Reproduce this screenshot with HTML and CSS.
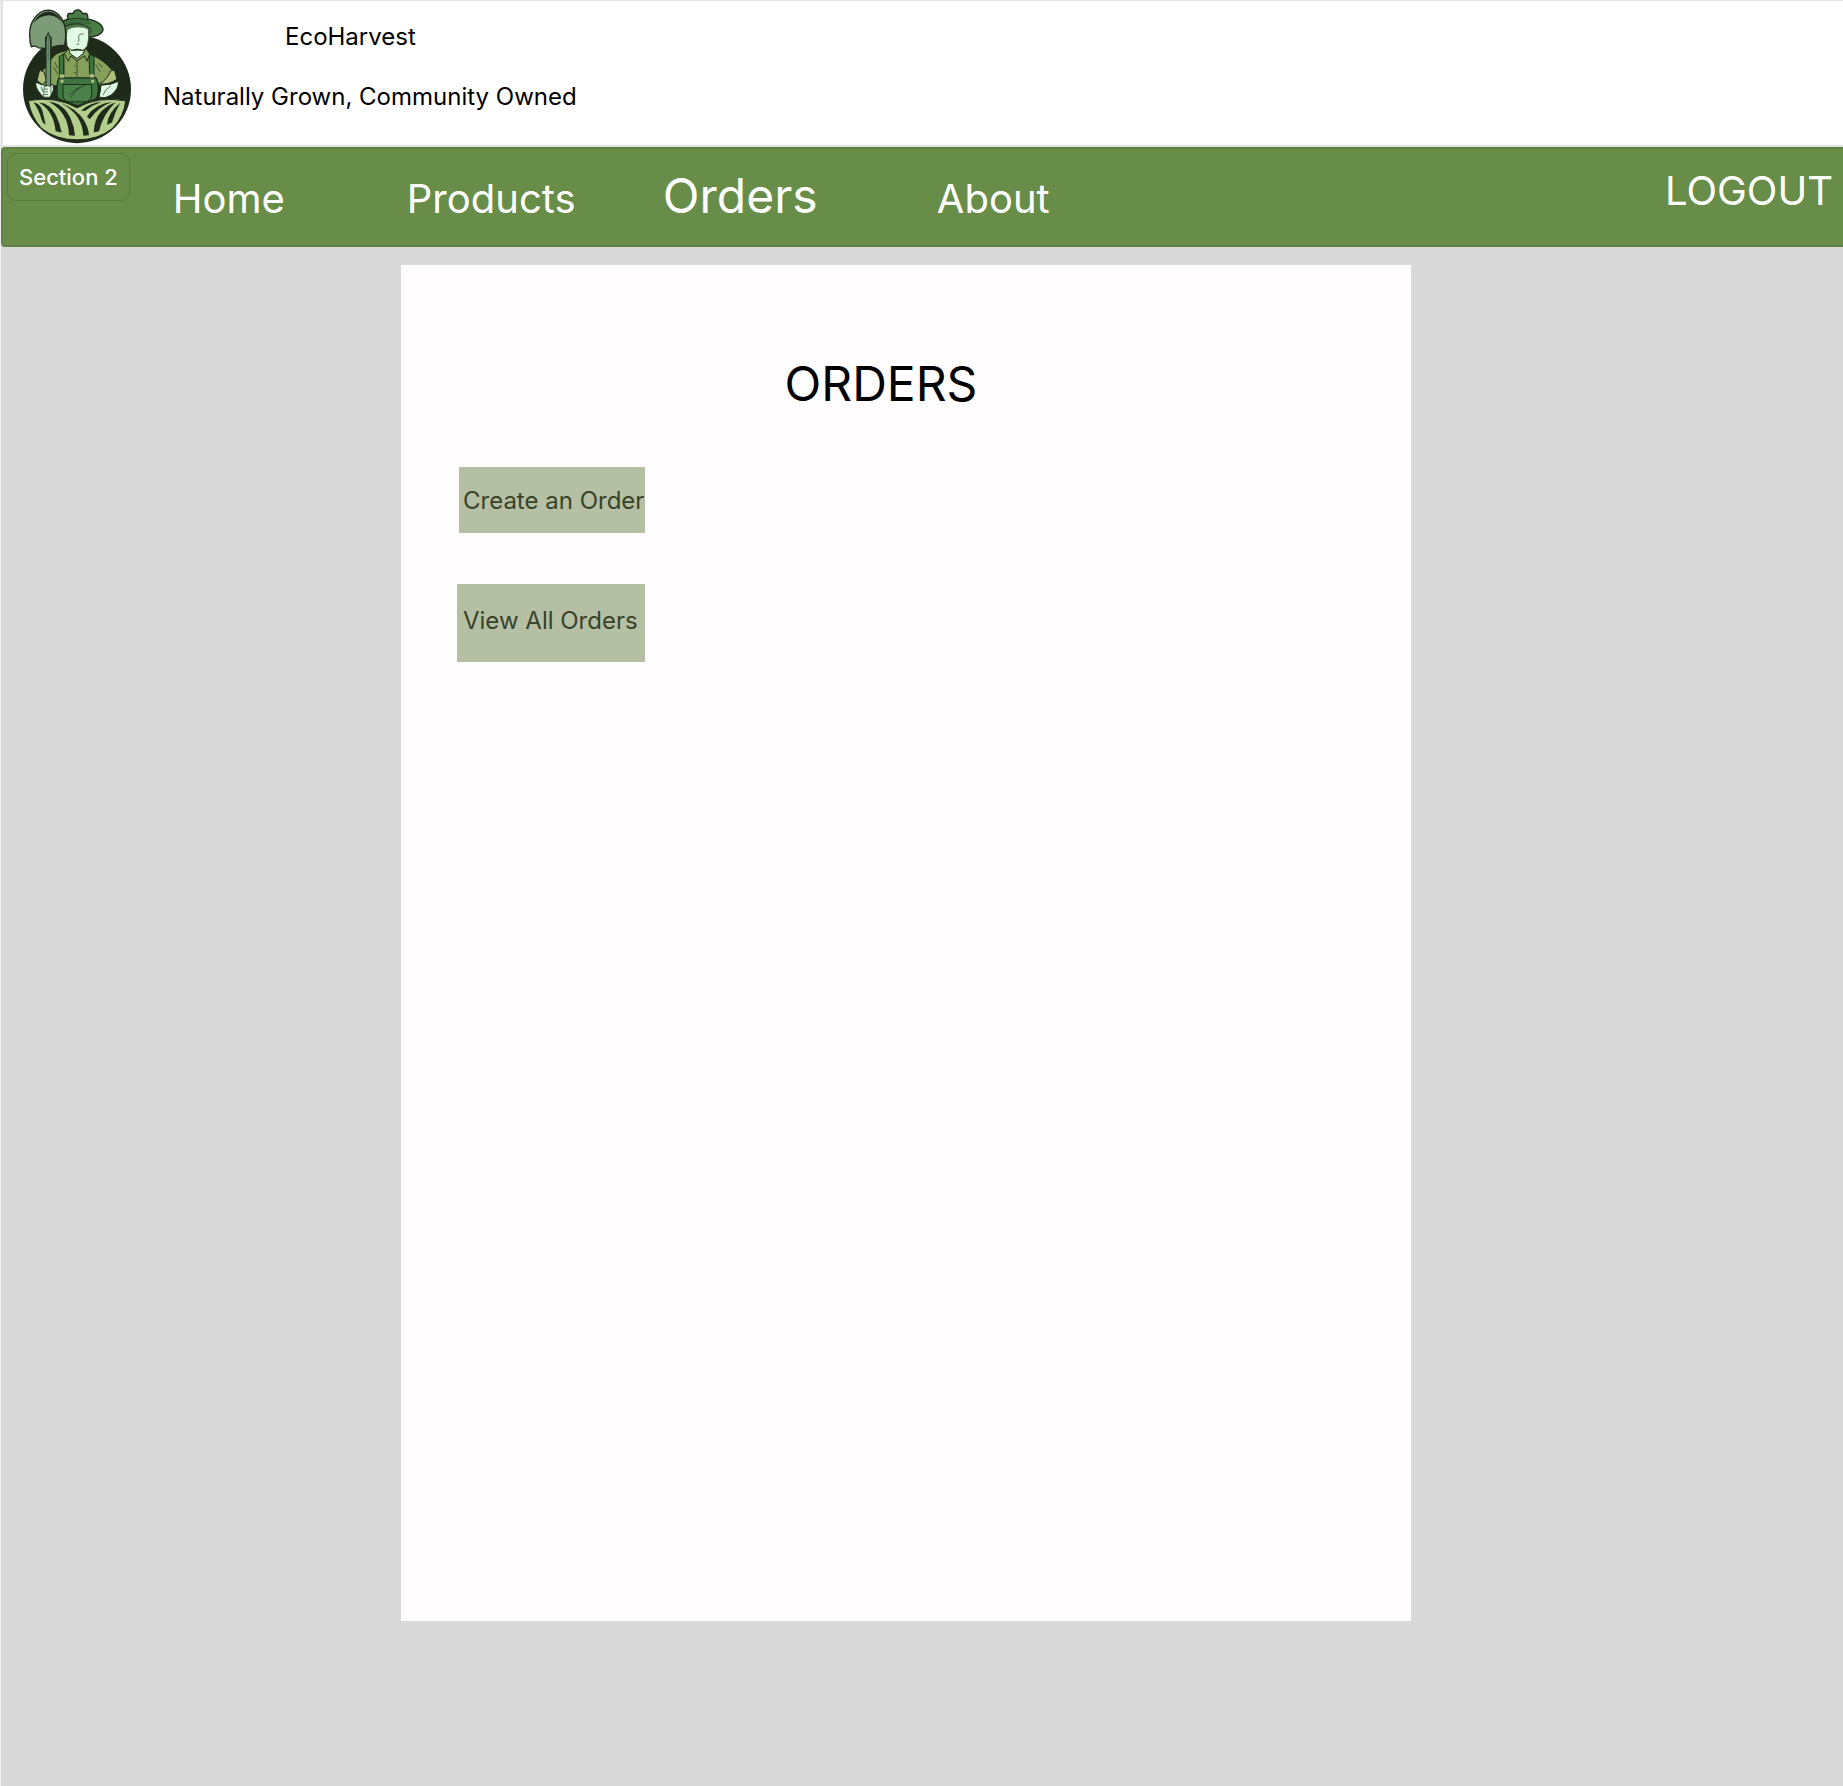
FILE: index.html
```html
<!DOCTYPE html>
<html lang="en">
<head>
<meta charset="utf-8">
<title>EcoHarvest – Orders</title>
<link rel="stylesheet" href="styles.css">
</head>
<body>
<header class="masthead">
  <svg class="logo" viewBox="67 24 330 408" role="img" aria-label="EcoHarvest farmer logo">
    <circle cx="232" cy="266" r="162" fill="#1f2b1a"/>
    <!-- hat -->
    <path d="M188 62Q198 60 205 55Q201 43 207 39L220 39Q224 28 234 28Q244 28 248 39L260 39Q266 44 264 55Q312 66 310 90Q302 108 268 109L262 120H200L190 100Z" fill="#4a7d47" stroke="#1f2b1a" stroke-width="4" stroke-linejoin="round"/>
    <path d="M194 64Q232 54 264 60L280 72Q240 66 196 80Z" fill="#3a6a3b"/>
    <path d="M194 77Q240 60 270 82Q278 90 268 102" fill="none" stroke="#1f2b1a" stroke-width="3"/>
    <path d="M205 57Q235 49 264 58" fill="none" stroke="#1f2b1a" stroke-width="3"/>
    <!-- shirt -->
    <path d="M204 148L172 158Q152 170 146 194L128 208L116 240L130 256H176L182 240H290L300 256L352 236L338 208Q312 176 266 158L256 146Z" fill="#84a05a" stroke="#1f2b1a" stroke-width="4" stroke-linejoin="round"/>
    <path d="M193 172V238M270 170V236" stroke="#1f2b1a" stroke-width="2"/>
    <path d="M232 174V232M162 200L174 220M288 192L302 214M296 188L308 200M166 186L174 204" fill="none" stroke="#1f2b1a" stroke-width="2"/>
    <circle cx="226" cy="196" r="2" fill="#1f2b1a"/><circle cx="226" cy="216" r="2" fill="#1f2b1a"/>
    <!-- rolled cuffs and hands -->
    <path d="M120 208L134 216L140 240L128 252L112 240Z" fill="#b0be7c" stroke="#1f2b1a" stroke-width="3"/>
    <path d="M344 208L352 236Q326 254 300 250Q324 236 332 212Z" fill="#b0be7c" stroke="#1f2b1a" stroke-width="3"/>
    <path d="M110 245Q134 260 160 252L162 268L152 290H132Q110 270 108 252Z" fill="#e0fbe4" stroke="#1f2b1a" stroke-width="3"/>
    <path d="M304 254Q336 254 356 242Q358 266 334 284Q316 296 298 290Q302 276 304 254Z" fill="#e0fbe4" stroke="#1f2b1a" stroke-width="3"/>
    <path d="M334 256Q314 268 310 284M124 258L130 274" fill="none" stroke="#1f2b1a" stroke-width="2"/>
    <!-- overalls -->
    <path d="M179 168L192 160V230H179ZM268 160L283 168V230H270Z" fill="#3d7540" stroke="#1f2b1a" stroke-width="3"/>
    <path d="M178 232H288Q293 236 294 246Q300 274 290 294L234 316L178 296Q170 290 172 270Q172 240 178 232Z" fill="#3d7540" stroke="#1f2b1a" stroke-width="4"/>
    <path d="M190 252H276V284Q274 302 256 304H208Q192 302 190 284Z" fill="#4a8149" stroke="#1f2b1a" stroke-width="3"/>
    <path d="M256 254Q226 264 208 284M240 262Q222 274 214 290" fill="none" stroke="#1f2b1a" stroke-width="2"/>
    <path d="M180 222H194V232H180ZM269 221H283V231H269Z" fill="#b0be7c"/>
    <circle cx="187" cy="242" r="5" fill="#b0be7c"/><circle cx="279" cy="242" r="5" fill="#b0be7c"/>
    <!-- face and collar -->
    <path d="M208 146Q232 158 256 146L252 160L232 176L212 160Z" fill="#e0fbe4"/>
    <path d="M202 88Q214 78 234 79Q256 78 266 86Q270 116 262 138Q256 148 248 150Q234 144 218 150Q206 146 202 136Q198 110 202 88Z" fill="#e0fbe4" stroke="#1f2b1a" stroke-width="2"/>
    <path d="M252 100Q236 100 237 108Q240 122 235 124M231 131H239" fill="none" stroke="#1f2b1a" stroke-width="2"/>
    <path d="M214 150Q232 142 252 150" fill="none" stroke="#1f2b1a" stroke-width="3"/>
    <path d="M206 144L194 160L206 182L214 166L232 182L254 166L262 182L270 160L258 142L250 160L232 174L212 160Z" fill="#84a05a" stroke="#1f2b1a" stroke-width="3" stroke-linejoin="round"/>
    <!-- shovel -->
    <path d="M146 29C112 30 88 66 90 104Q90 124 95 139Q106 134 116 142L138 144V110H154V142Q170 134 195 134Q198 120 198 102C198 66 180 30 146 29Z" fill="#7c9c78" stroke="#1f2b1a" stroke-width="4" stroke-linejoin="round"/>
    <path d="M100 70Q118 34 146 33Q176 34 192 72Q176 45 148 44Q118 45 100 70Z" fill="#1f2b1a"/>
    <path d="M139 258V124Q140 104 146 96Q152 106 153 124V258Z" fill="#6c9171" stroke="#1f2b1a" stroke-width="3"/>
    <path d="M146 100V180" stroke="#3f6247" stroke-width="2"/>
    <path d="M133 260Q142 252 154 258V282L150 290H132Z" fill="#e0fbe4" stroke="#1f2b1a" stroke-width="2"/>
    <path d="M134 266H145M134 274H145M134 282H145" stroke="#1f2b1a" stroke-width="2"/>
    <!-- ploughed field -->
    <path d="M86 300Q170 286 232 322Q294 286 378 301Q374 346 338 384Q296 418 232 418Q168 418 126 384Q92 346 86 300Z" fill="#b3cd8c" stroke="#1f2b1a" stroke-width="3"/>
    <g fill="#1f2b1a">
      <path d="M102 306Q120 308 128 330L138 372Q130 370 126 358Q118 328 102 306Z"/>
      <path d="M118 306Q150 308 168 342Q180 366 186 396L168 392Q162 332 118 306Z"/>
      <path d="M148 304Q190 308 212 352Q224 378 226 406L208 404Q206 336 148 304Z"/>
      <path d="M184 308Q230 324 252 358Q266 380 268 404L251 406Q248 340 184 308Z"/>
      <path d="M244 331Q268 308 306 304Q278 314 257 331Z"/>
      <path d="M262 348Q286 310 338 304Q296 320 270 356Z"/>
      <path d="M282 396Q284 356 304 334Q322 314 348 305Q310 340 298 392Z"/>
      <path d="M322 373Q324 338 362 307Q346 334 337 366Z"/>
    </g>
  </svg>
  <div class="brand">
    <p class="brand-name">EcoHarvest</p>
    <p class="brand-tagline">Naturally Grown, Community Owned</p>
  </div>
</header>
<nav class="navbar" aria-label="Main">
  <span class="section-tag">Section 2</span>
  <div class="nav-links">
    <a href="#home">Home</a>
    <a href="#products">Products</a>
    <a class="current" href="#orders" aria-current="page">Orders</a>
    <a href="#about">About</a>
  </div>
  <a class="logout" href="#logout">LOGOUT</a>
</nav>
<main class="page">
  <section class="panel">
    <h1 class="title">ORDERS</h1>
    <div class="actions">
      <button class="action create" type="button">Create an Order</button>
      <button class="action view" type="button">View All Orders</button>
    </div>
  </section>
</main>
</body>
</html>
```
FILE: styles.css
```css
* {
  box-sizing: border-box;
}

body {
  margin: 0;
  min-height: 100vh;
  display: flex;
  flex-direction: column;
  border-left: 1px solid #eeeeee;
  background: #d9d9d9;
  color: #000;
  font-family: Inter, "Liberation Sans", sans-serif;
  font-size: 24px;
  line-height: 30px;
}

.masthead {
  display: flex;
  align-items: flex-start;
  gap: 31px;
  padding: 7px 20px 0 19px;
  border: 2px solid #e4e4e4;
  border-width: 1px 0 2px 2px;
  border-radius: 3px 0 0 3px;
  background: #fff;
}

.logo {
  width: 110px;
  height: 137px;
}

.brand {
  display: grid;
  gap: 30px;
  padding-top: 14px;
}

.brand p {
  margin: 0;
}

.brand-name {
  padding-left: 122px;
}

.navbar {
  display: flex;
  align-items: flex-start;
  min-height: 100px;
  padding: 4px 10px 4px 4px;
  border: 2px solid #5f8245;
  border-right: 0;
  border-radius: 4px 0 0 4px;
  background: #678d48;
  color: #fff;
}

.section-tag {
  padding: 8px 11px;
  border: 1px solid #577b3d;
  border-radius: 9px;
  font-size: 22px;
  font-weight: 500;
}

.nav-links {
  display: grid;
  grid-template-columns: 234px 256px 274px auto;
  align-items: baseline;
  flex: 1;
  padding: 15px 0 0 43px;
}

.navbar a {
  color: #fff;
  font-size: 40px;
  line-height: 48px;
  text-decoration: none;
}

.navbar a.current {
  font-size: 48px;
  line-height: 56px;
}

.logout {
  padding-top: 14px;
}

.page {
  flex: 1;
  display: flex;
  justify-content: center;
  align-items: flex-start;
  padding: 18px 32px 164px 0;
}

.panel {
  width: 1010px;
  min-height: 1356px;
  padding: 91px 56px;
  background: #fffdfd;
}

.title {
  margin: 0 0 55px;
  padding-right: 50px;
  font-size: 48px;
  font-weight: 400;
  line-height: 56px;
  text-align: center;
}

.actions {
  display: flex;
  flex-direction: column;
  align-items: flex-start;
  gap: 51px;
}

.action {
  width: 188px;
  padding: 2px 0 0 6px;
  border: 0;
  background: #b5bfa4;
  color: #384329;
  font: inherit;
  text-align: left;
  white-space: nowrap;
}

.create {
  width: 186px;
  height: 66px;
  margin-left: 2px;
  padding-left: 4px;
}

.view {
  height: 78px;
  padding-bottom: 6px;
}
```
